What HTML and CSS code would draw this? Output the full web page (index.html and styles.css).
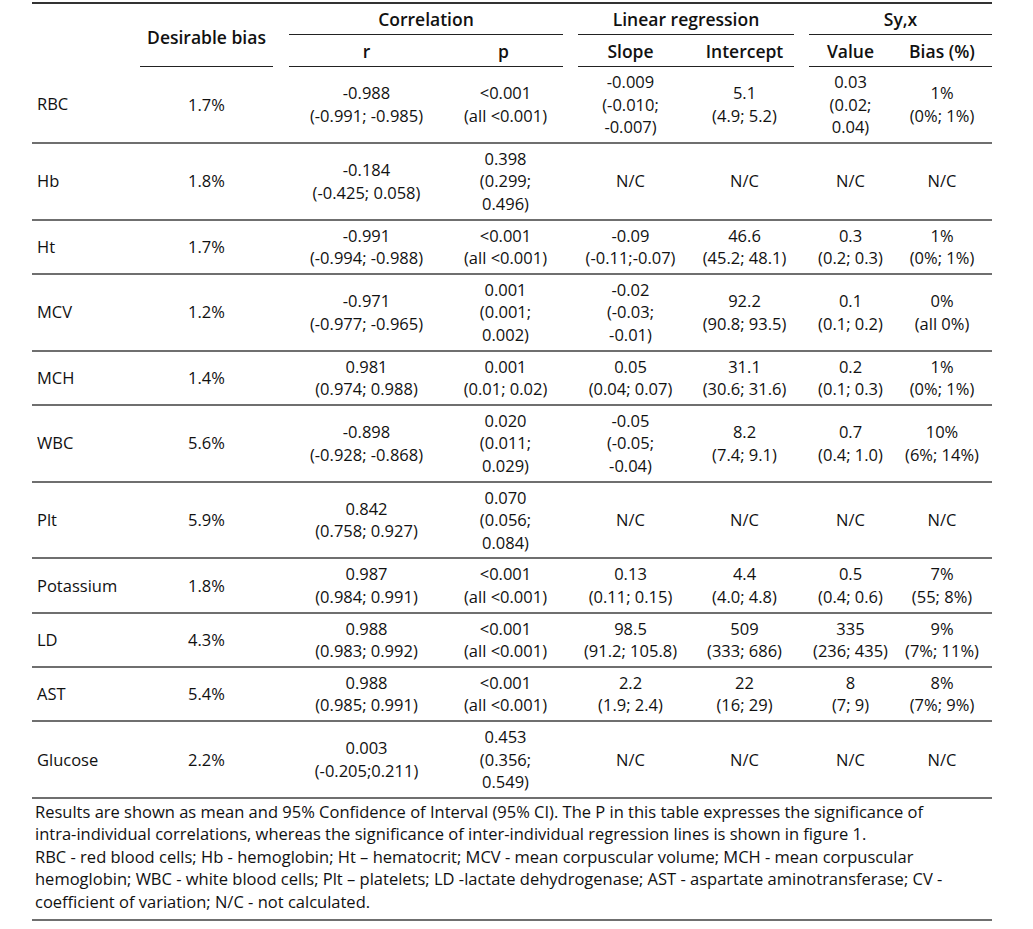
FILE: index.html
```html
<!DOCTYPE html>
<html lang="en">
<head>
<meta charset="utf-8">
<title>Table</title>
<link rel="stylesheet" href="styles.css">
</head>
<body>
<table class="results">
  <colgroup>
    <col class="c-lab"><col class="c-bias"><col class="c-gap1">
    <col class="c-r"><col class="c-p"><col class="c-gap2">
    <col class="c-slope"><col class="c-int"><col class="c-gap3">
    <col class="c-val"><col class="c-bp">
  </colgroup>
  <thead>
    <tr class="h1">
      <th class="lab" rowspan="2"></th>
      <th class="bias" rowspan="2">Desirable bias</th>
      <th class="gap" rowspan="2"></th>
      <th class="grp" colspan="2">Correlation</th>
      <th class="gap" rowspan="2"></th>
      <th class="grp" colspan="2">Linear regression</th>
      <th class="gap" rowspan="2"></th>
      <th class="grp" colspan="2">Sy,x</th>
    </tr>
    <tr class="h2">
      <th class="sub">r</th>
      <th class="sub">p</th>
      <th class="sub">Slope</th>
      <th class="sub int">Intercept</th>
      <th class="sub">Value</th>
      <th class="sub">Bias (%)</th>
    </tr>
  </thead>
  <tbody>
    <tr>
      <td class="lab">RBC</td><td>1.7%</td><td class="gap"></td>
      <td>-0.988<br>(-0.991; -0.985)</td><td class="p">&lt;0.001<br>(all &lt;0.001)</td><td class="gap"></td>
      <td>-0.009<br>(-0.010;<br>-0.007)</td><td class="int">5.1<br>(4.9; 5.2)</td><td class="gap"></td>
      <td>0.03<br>(0.02;<br>0.04)</td><td>1%<br>(0%; 1%)</td>
    </tr>
    <tr>
      <td class="lab">Hb</td><td>1.8%</td><td class="gap"></td>
      <td>-0.184<br>(-0.425; 0.058)</td><td class="p">0.398<br>(0.299;<br>0.496)</td><td class="gap"></td>
      <td>N/C</td><td class="int">N/C</td><td class="gap"></td>
      <td>N/C</td><td>N/C</td>
    </tr>
    <tr>
      <td class="lab">Ht</td><td>1.7%</td><td class="gap"></td>
      <td>-0.991<br>(-0.994; -0.988)</td><td class="p">&lt;0.001<br>(all &lt;0.001)</td><td class="gap"></td>
      <td>-0.09<br>(-0.11;-0.07)</td><td class="int">46.6<br>(45.2; 48.1)</td><td class="gap"></td>
      <td>0.3<br>(0.2; 0.3)</td><td>1%<br>(0%; 1%)</td>
    </tr>
    <tr>
      <td class="lab">MCV</td><td>1.2%</td><td class="gap"></td>
      <td>-0.971<br>(-0.977; -0.965)</td><td class="p">0.001<br>(0.001;<br>0.002)</td><td class="gap"></td>
      <td>-0.02<br>(-0.03;<br>-0.01)</td><td class="int">92.2<br>(90.8; 93.5)</td><td class="gap"></td>
      <td>0.1<br>(0.1; 0.2)</td><td>0%<br>(all 0%)</td>
    </tr>
    <tr>
      <td class="lab">MCH</td><td>1.4%</td><td class="gap"></td>
      <td>0.981<br>(0.974; 0.988)</td><td class="p">0.001<br>(0.01; 0.02)</td><td class="gap"></td>
      <td>0.05<br>(0.04; 0.07)</td><td class="int">31.1<br>(30.6; 31.6)</td><td class="gap"></td>
      <td>0.2<br>(0.1; 0.3)</td><td>1%<br>(0%; 1%)</td>
    </tr>
    <tr>
      <td class="lab">WBC</td><td>5.6%</td><td class="gap"></td>
      <td>-0.898<br>(-0.928; -0.868)</td><td class="p">0.020<br>(0.011;<br>0.029)</td><td class="gap"></td>
      <td>-0.05<br>(-0.05;<br>-0.04)</td><td class="int">8.2<br>(7.4; 9.1)</td><td class="gap"></td>
      <td>0.7<br>(0.4; 1.0)</td><td>10%<br>(6%; 14%)</td>
    </tr>
    <tr>
      <td class="lab">Plt</td><td>5.9%</td><td class="gap"></td>
      <td>0.842<br>(0.758; 0.927)</td><td class="p">0.070<br>(0.056;<br>0.084)</td><td class="gap"></td>
      <td>N/C</td><td class="int">N/C</td><td class="gap"></td>
      <td>N/C</td><td>N/C</td>
    </tr>
    <tr>
      <td class="lab">Potassium</td><td>1.8%</td><td class="gap"></td>
      <td>0.987<br>(0.984; 0.991)</td><td class="p">&lt;0.001<br>(all &lt;0.001)</td><td class="gap"></td>
      <td>0.13<br>(0.11; 0.15)</td><td class="int">4.4<br>(4.0; 4.8)</td><td class="gap"></td>
      <td>0.5<br>(0.4; 0.6)</td><td>7%<br>(55; 8%)</td>
    </tr>
    <tr>
      <td class="lab">LD</td><td>4.3%</td><td class="gap"></td>
      <td>0.988<br>(0.983; 0.992)</td><td class="p">&lt;0.001<br>(all &lt;0.001)</td><td class="gap"></td>
      <td>98.5<br>(91.2; 105.8)</td><td class="int">509<br>(333; 686)</td><td class="gap"></td>
      <td>335<br>(236; 435)</td><td>9%<br>(7%; 11%)</td>
    </tr>
    <tr>
      <td class="lab">AST</td><td>5.4%</td><td class="gap"></td>
      <td>0.988<br>(0.985; 0.991)</td><td class="p">&lt;0.001<br>(all &lt;0.001)</td><td class="gap"></td>
      <td>2.2<br>(1.9; 2.4)</td><td class="int">22<br>(16; 29)</td><td class="gap"></td>
      <td>8<br>(7; 9)</td><td>8%<br>(7%; 9%)</td>
    </tr>
    <tr>
      <td class="lab">Glucose</td><td>2.2%</td><td class="gap"></td>
      <td>0.003<br>(-0.205;0.211)</td><td class="p">0.453<br>(0.356;<br>0.549)</td><td class="gap"></td>
      <td>N/C</td><td class="int">N/C</td><td class="gap"></td>
      <td>N/C</td><td>N/C</td>
    </tr>
  </tbody>
  <tfoot>
    <tr>
      <td class="note" colspan="11">Results are shown as mean and 95% Confidence of Interval (95% CI). The P in this table expresses the significance of<br>intra-individual correlations, whereas the significance of inter-individual regression lines is shown in figure 1.<br>RBC - red blood cells; Hb - hemoglobin; Ht – hematocrit; MCV - mean corpuscular volume; MCH - mean corpuscular<br>hemoglobin; WBC - white blood cells; Plt – platelets; LD -lactate dehydrogenase; AST - aspartate aminotransferase; CV -<br>coefficient of variation; N/C - not calculated.</td>
    </tr>
  </tfoot>
</table>
</body>
</html>
```

FILE: styles.css
```css
html, body {
  margin: 0;
  padding: 0;
  background: #ffffff;
}

body {
  padding: 2px 0 0 32px;
  font-family: "Open Sans", "Noto Sans", sans-serif;
  font-size: 16.5px;
  color: #111111;
}

.results {
  border-collapse: collapse;
  table-layout: fixed;
  width: 960px;
}

.c-lab { width: 108px; }
.c-bias { width: 133px; }
.c-gap1 { width: 16px; }
.c-r { width: 155px; }
.c-p { width: 119px; }
.c-gap2 { width: 15px; }
.c-slope { width: 105px; }
.c-int { width: 111px; }
.c-gap3 { width: 15px; }
.c-val { width: 83px; }
.c-bp { width: 100px; }

th {
  font-weight: 600;
  font-size: 17.5px;
  text-align: center;
  padding: 0;
  line-height: 24px;
  white-space: nowrap;
}

.h1 th {
  border-top: 2px solid #333;
  height: 30px;
}

.h1 th.grp {
  border-bottom: 1px solid #222;
}

.h1 th.bias {
  border-bottom: 1px solid #222;
  padding-top: 4px;
}

.h2 th {
  height: 31px;
  border-bottom: 1px solid #222;
}

th.int, td.int {
  padding-left: 12px;
}

td {
  text-align: center;
  vertical-align: middle;
  padding: 4px 0 3.25px;
  line-height: 22.5px;
  white-space: nowrap;
  border-bottom: 2px solid #6f6f6f;
}

td.lab {
  text-align: left;
  padding-left: 5px;
}

td.p {
  padding-left: 4px;
}

td.note {
  text-align: left;
  padding: 2px 3px 6px 3px;
  line-height: 22.5px;
}
```
